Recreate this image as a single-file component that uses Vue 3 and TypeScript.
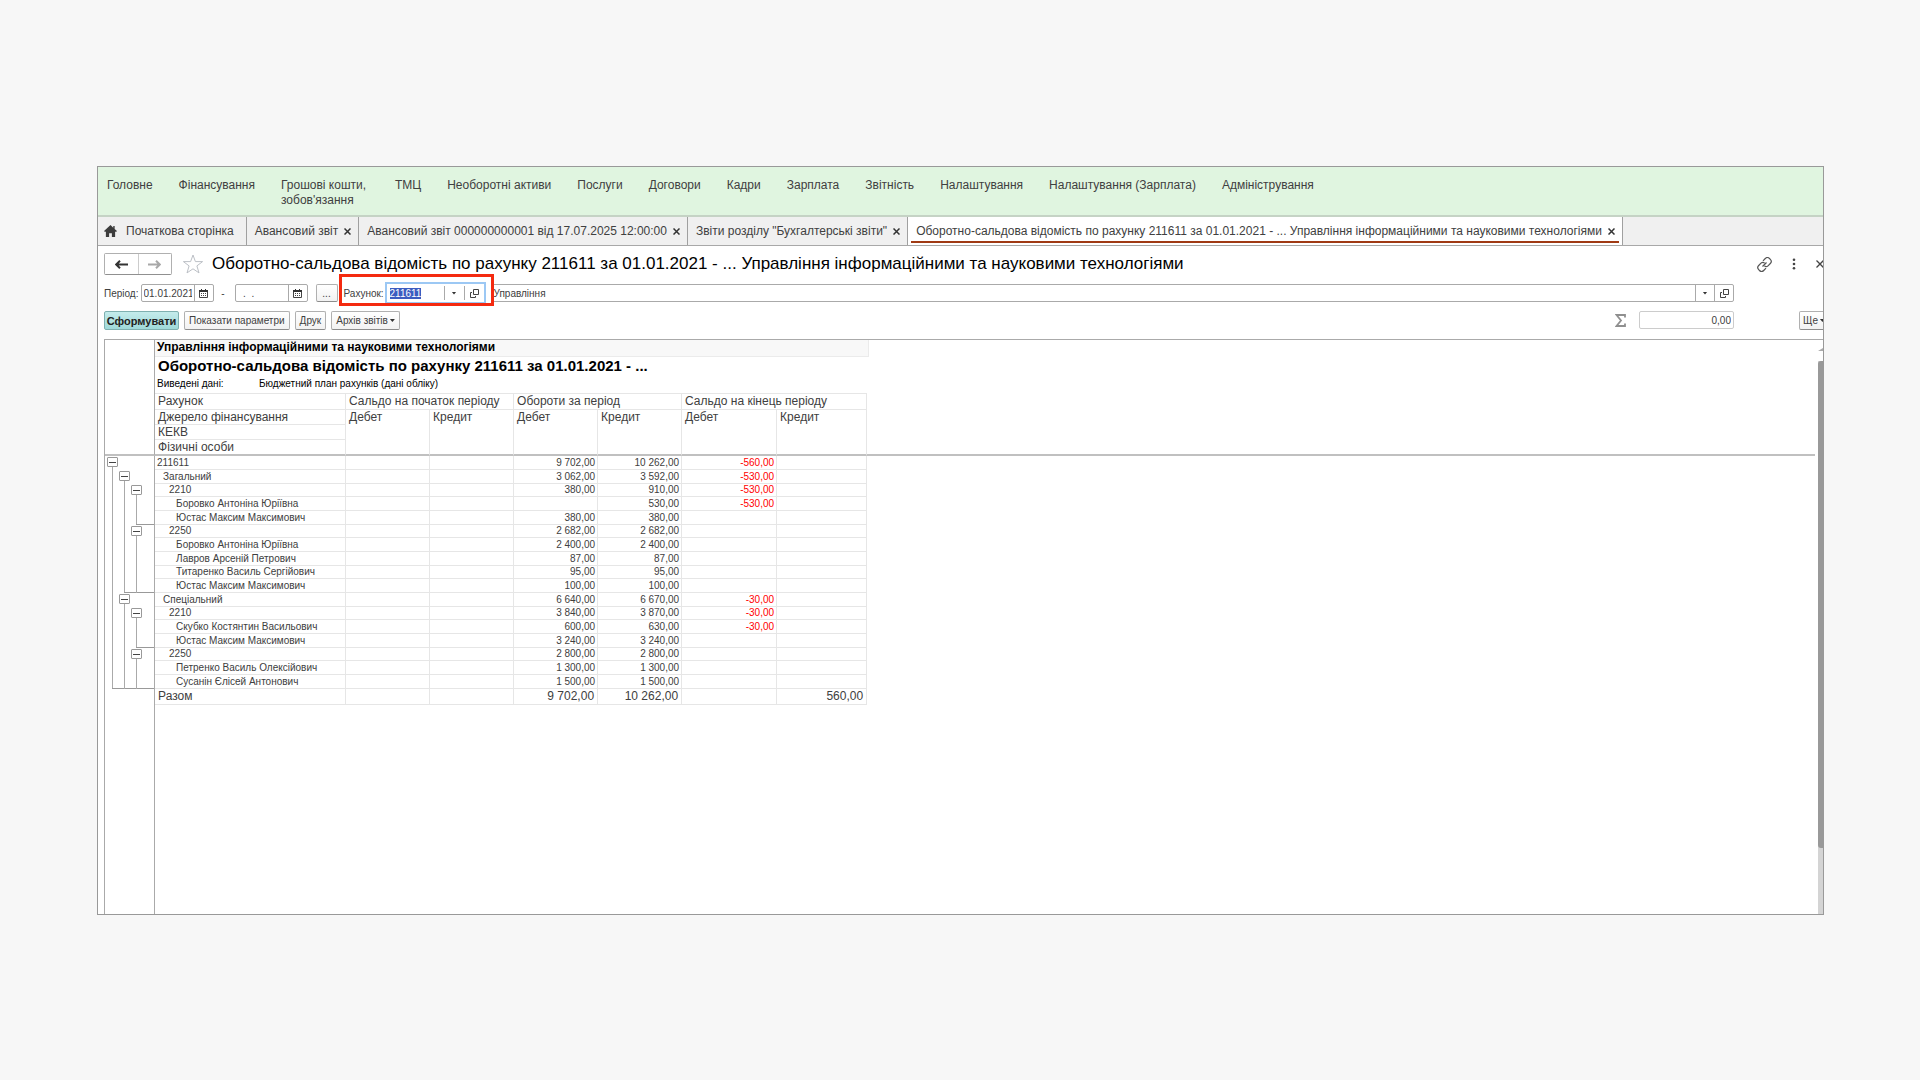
<script setup lang="ts">
import { onMounted, ref } from 'vue'

interface Row {
  name: string
  level: number
  values: string[]
  ends?: number
}

const menu: string[] = [
  'Головне', 'Фінансування', "Грошові кошти, зобов'язання", 'ТМЦ', 'Необоротні активи', 'Послуги', 'Договори',
  'Кадри', 'Зарплата', 'Звітність', 'Налаштування', 'Налаштування (Зарплата)', 'Адміністрування',
]

const tabs: string[] = [
  'Авансовий звіт',
  'Авансовий звіт 000000000001 від 17.07.2025 12:00:00',
  'Звіти розділу "Бухгалтерські звіти"',
  'Оборотно-сальдова відомість по рахунку 211611 за 01.01.2021 - ... Управління інформаційними та науковими технологіями',
]

// values: opening debit, opening credit, turnover debit, turnover credit, closing debit, closing credit
// ends: the outermost group level that closes after the row
const rows: Row[] = [
  { name: '211611', level: 0, values: ['', '', '9 702,00', '10 262,00', '-560,00', ''] },
  { name: 'Загальний', level: 1, values: ['', '', '3 062,00', '3 592,00', '-530,00', ''] },
  { name: '2210', level: 2, values: ['', '', '380,00', '910,00', '-530,00', ''] },
  { name: 'Боровко Антоніна Юріївна', level: 3, values: ['', '', '', '530,00', '-530,00', ''] },
  { name: 'Юстас Максим Максимович', level: 3, values: ['', '', '380,00', '380,00', '', ''], ends: 2 },
  { name: '2250', level: 2, values: ['', '', '2 682,00', '2 682,00', '', ''] },
  { name: 'Боровко Антоніна Юріївна', level: 3, values: ['', '', '2 400,00', '2 400,00', '', ''] },
  { name: 'Лавров Арсеній Петрович', level: 3, values: ['', '', '87,00', '87,00', '', ''] },
  { name: 'Титаренко Василь Сергійович', level: 3, values: ['', '', '95,00', '95,00', '', ''] },
  { name: 'Юстас Максим Максимович', level: 3, values: ['', '', '100,00', '100,00', '', ''], ends: 1 },
  { name: 'Спеціальний', level: 1, values: ['', '', '6 640,00', '6 670,00', '-30,00', ''] },
  { name: '2210', level: 2, values: ['', '', '3 840,00', '3 870,00', '-30,00', ''] },
  { name: 'Скубко Костянтин Васильович', level: 3, values: ['', '', '600,00', '630,00', '-30,00', ''] },
  { name: 'Юстас Максим Максимович', level: 3, values: ['', '', '3 240,00', '3 240,00', '', ''], ends: 2 },
  { name: '2250', level: 2, values: ['', '', '2 800,00', '2 800,00', '', ''] },
  { name: 'Петренко Василь Олексійович', level: 3, values: ['', '', '1 300,00', '1 300,00', '', ''] },
  { name: 'Сусанін Єлісей Антонович', level: 3, values: ['', '', '1 500,00', '1 500,00', '', ''], ends: 0 },
]
const total: string[] = ['', '', '9 702,00', '10 262,00', '', '560,00']

const dateFrom = ref('01.01.2021')
const dateTo = ref('  .  .')
const account = ref('211611')
const unit = ref('Управління')
const sum = ref('0,00')
const accountInput = ref<HTMLInputElement | null>(null)

function treeClass(row: Row, lane: number): Record<string, boolean> {
  return {
    start: row.level === lane,
    pass: row.level > lane,
    hook: row.ends === lane,
  }
}

onMounted(() => {
  accountInput.value?.focus()
  accountInput.value?.select()
})
</script>

<template>
  <div class="page">
    <main class="window">
      <nav class="menu">
        <a v-for="item in menu" :key="item" href="#" :class="{ narrow: item.startsWith('Грошові') }">{{ item }}</a>
      </nav>

      <div class="tabs">
        <div class="tab home">
          <svg width="13" height="12" viewBox="0 0 14 13"><path d="M7 0 0 6.500l1 1L2 7v6h3.500V9h3v4H12V7l1 .5 1-1-2.500-2.300V1H10v2z" fill="#3c3c3c" /></svg>
          <a href="#">Початкова сторінка</a>
        </div>
        <div v-for="(tab, i) in tabs" :key="tab" class="tab" :class="{ active: i === tabs.length - 1 }">
          <a href="#">{{ tab }}</a>
          <button class="bare" aria-label="Закрити вкладку">
            <svg width="7" height="7" viewBox="0 0 7 7"><path d="M.5.5l6 6m0-6l-6 6" stroke="#333" stroke-width="1.500" /></svg>
          </button>
        </div>
      </div>

      <header class="title-row">
        <div class="history">
          <button aria-label="Назад">
            <svg width="13" height="9" viewBox="0 0 13 9"><path d="M1 4.500h12M5 .8 1.200 4.500 5 8.200" fill="none" stroke="#333" stroke-width="2" /></svg>
          </button>
          <button aria-label="Вперед">
            <svg width="13" height="9" viewBox="0 0 13 9"><path d="M0 4.500h12M8 .8l3.800 3.700L8 8.200" fill="none" stroke="#a8a8a8" stroke-width="2" /></svg>
          </button>
        </div>
        <button class="bare star" aria-label="Обране">
          <svg width="22" height="20" viewBox="0 0 22 20"><path d="M11 1l2.400 6.600h7.200l-5.700 4.300 2.100 7L11 14.800 5 18.900l2.100-7L1.400 7.600h7.200z" fill="none" stroke="#bcc0c6" /></svg>
        </button>
        <h1>Оборотно-сальдова відомість по рахунку 211611 за 01.01.2021 - ... Управління інформаційними та науковими технологіями</h1>
        <div class="window-actions">
          <button class="bare" aria-label="Посилання">
            <svg width="15" height="15" viewBox="0 0 15 15" fill="none" stroke="#555" stroke-width="1.200"><path d="M6 3.800l2.300-2.300a3 3 0 0 1 4.200 0l.8.8a3 3 0 0 1 0 4.200L11 8.800a2.800 2.800 0 0 1-3.600.3M9 11.200l-2.300 2.300a3 3 0 0 1-4.200 0l-.8-.8a3 3 0 0 1 0-4.200L4 6.200a2.800 2.800 0 0 1 3.600-.3M5.500 9.500l4-4" /></svg>
          </button>
          <button class="bare" aria-label="Меню">
            <svg width="4" height="12" viewBox="0 0 4 12" fill="#444"><circle cx="2" cy="1.800" r="1.300" /><circle cx="2" cy="6" r="1.300" /><circle cx="2" cy="10.200" r="1.300" /></svg>
          </button>
          <button class="bare" aria-label="Закрити">
            <svg width="8" height="8" viewBox="0 0 8 8"><path d="M.5.5l7 7m0-7l-7 7" stroke="#444" stroke-width="1.300" /></svg>
          </button>
        </div>
      </header>

      <div class="filters">
        <label for="from">Період:</label>
        <span class="field date">
          <input id="from" v-model="dateFrom" type="text" />
          <button aria-label="Календар">
            <svg width="9" height="9" viewBox="0 0 9 9"><path d="M.5 1.500h8v7h-8z" fill="#fff" stroke="#444" /><path d="M0 1h9v2H0zM2 0h1v1H2zM6 0h1v1H6z" fill="#333" /><path d="M2 4.500h5M2 6.500h5" stroke="#444" stroke-dasharray="1 1" /></svg>
          </button>
        </span>
        <span class="dash">-</span>
        <span class="field date">
          <input v-model="dateTo" type="text" aria-label="Кінець періоду" />
          <button aria-label="Календар">
            <svg width="9" height="9" viewBox="0 0 9 9"><path d="M.5 1.500h8v7h-8z" fill="#fff" stroke="#444" /><path d="M0 1h9v2H0zM2 0h1v1H2zM6 0h1v1H6z" fill="#333" /><path d="M2 4.500h5M2 6.500h5" stroke="#444" stroke-dasharray="1 1" /></svg>
          </button>
        </span>
        <button class="btn more">...</button>
        <div class="account">
          <label for="account">Рахунок:</label>
          <span class="field focused">
            <input id="account" ref="accountInput" v-model="account" type="text" />
            <button aria-label="Вибрати"><span class="caret"></span></button>
            <button aria-label="Відкрити">
              <svg width="9" height="9" viewBox="0 0 9 9" fill="none" stroke="#444"><path d="M3.500.500h5v5h-5zM2 3.500H.5v5h5V7" /></svg>
            </button>
          </span>
        </div>
        <span class="field unit">
          <input v-model="unit" type="text" aria-label="Підрозділ" />
          <button aria-label="Вибрати"><span class="caret"></span></button>
          <button aria-label="Відкрити">
            <svg width="9" height="9" viewBox="0 0 9 9" fill="none" stroke="#444"><path d="M3.500.500h5v5h-5zM2 3.500H.5v5h5V7" /></svg>
          </button>
        </span>
      </div>

      <div class="commands">
        <button class="btn primary">Сформувати</button>
        <button class="btn">Показати параметри</button>
        <button class="btn">Друк</button>
        <button class="btn">Архів звітів<span class="caret"></span></button>
        <label class="sigma" for="sum" aria-label="Сума">
          <svg width="11" height="13" viewBox="0 0 11 13"><path d="M10 3.500V1H1.500l4.500 5.500L1.500 12H10V9.500" fill="none" stroke="#8f8f8f" stroke-width="1.800" /></svg>
        </label>
        <input id="sum" v-model="sum" class="sum" type="text" />
        <button class="btn rest">Ще<span class="caret"></span></button>
      </div>

      <div class="sheet">
        <div class="paper">
          <section class="caption">
            <p class="org">Управління інформаційними та науковими технологіями</p>
            <h2>Оборотно-сальдова відомість по рахунку 211611 за 01.01.2021 - ...</h2>
            <p class="output"><span>Виведені дані:</span><span>Бюджетний план рахунків (дані обліку)</span></p>
          </section>
          <table>
            <colgroup>
              <col class="c-pad" /><col class="c-lane" /><col class="c-lane" /><col class="c-lane" /><col class="c-edge" />
              <col class="c-name" /><col class="c-num" /><col class="c-num" /><col class="c-num" /><col class="c-num" />
              <col class="c-wide" /><col class="c-last" /><col />
            </colgroup>
            <thead>
              <tr>
                <td class="gutter" colspan="5" rowspan="4"></td>
                <th>Рахунок</th>
                <th colspan="2">Сальдо на початок періоду</th>
                <th colspan="2">Обороти за період</th>
                <th colspan="2">Сальдо на кінець періоду</th>
                <td class="blank" rowspan="4"></td>
              </tr>
              <tr>
                <th>Джерело фінансування</th>
                <th rowspan="3">Дебет</th>
                <th rowspan="3">Кредит</th>
                <th rowspan="3">Дебет</th>
                <th rowspan="3">Кредит</th>
                <th rowspan="3">Дебет</th>
                <th rowspan="3">Кредит</th>
              </tr>
              <tr><th>КЕКВ</th></tr>
              <tr><th>Фізичні особи</th></tr>
            </thead>
            <tbody>
              <tr v-for="(row, i) in rows" :key="i">
                <td></td>
                <td v-for="lane in [0, 1, 2]" :key="lane" class="lane" :class="[treeClass(row, lane), 'lane-' + lane]">
                  <button v-if="row.level === lane" aria-label="Згорнути групу"></button>
                </td>
                <td class="gutter"></td>
                <th scope="row" :class="'level-' + row.level">{{ row.name }}</th>
                <td v-for="(value, k) in row.values" :key="k" class="num" :class="{ negative: value.startsWith('-') }">{{ value }}</td>
                <td></td>
              </tr>
            </tbody>
            <tfoot>
              <tr>
                <td class="gutter" colspan="5"></td>
                <th scope="row">Разом</th>
                <td v-for="(value, k) in total" :key="k" class="num">{{ value }}</td>
                <td></td>
              </tr>
            </tfoot>
          </table>
          <div class="empty"></div>
        </div>
        <div class="scrollbar">
          <span class="up"></span>
          <div class="track"><div class="thumb"></div></div>
        </div>
      </div>
    </main>
  </div>
</template>

<style>
body {
  margin: 0;
  background: #f7f7f7;
}
</style>

<style scoped>
* {
  box-sizing: border-box;
}
.page {
  min-height: 100vh;
  padding: 166px 96px 165px 97px;
  display: flex;
  font-family: "Liberation Sans", Arial, sans-serif;
  font-size: 10px;
  color: #404040;
}
.window {
  flex: 1;
  min-width: 0;
  display: flex;
  flex-direction: column;
  background: #fff;
  border: 1px solid #999;
  overflow: hidden;
}
a {
  color: inherit;
  text-decoration: none;
}
button,
input {
  font: inherit;
  color: inherit;
  margin: 0;
  padding: 0;
}
svg {
  display: block;
}
.bare {
  border: 0;
  background: none;
}
.menu {
  display: flex;
  gap: 26px;
  height: 50px;
  padding: 11px 9px 0;
  background: #e0f5e0;
  border-bottom: 2px solid #c5d3c5;
  font-size: 12px;
  line-height: 15px;
  white-space: nowrap;
}
.menu .narrow {
  width: 88px;
  white-space: normal;
}
.tabs {
  display: flex;
  height: 29px;
  background: #f0f0f0;
  border-bottom: 1px solid #a8a8a8;
  font-size: 12px;
}
.tab {
  display: flex;
  align-items: center;
  gap: 6px;
  padding: 0 7px 0 8px;
  border-right: 1px solid #a0a0a0;
  white-space: nowrap;
}
.home {
  gap: 9px;
  padding: 0 12px 0 6px;
}
.tab.active {
  position: relative;
  background: #fff;
}
.tab.active::after {
  content: "";
  position: absolute;
  left: 3px;
  right: 3px;
  bottom: 2px;
  height: 2px;
  background: #a03a14;
}
.title-row {
  display: flex;
  align-items: center;
  height: 22px;
  margin: 7px 0 0 6px;
}
.history {
  display: flex;
  width: 68px;
  height: 22px;
  border: 1px solid #b0b0b0;
  border-bottom-color: #909090;
  border-radius: 2px;
}
.history button {
  flex: 1;
  display: grid;
  place-items: center;
  border: 0;
  background: #fff;
}
.history button + button {
  border-left: 1px solid #ccc;
}
.star {
  margin: 0 8px 0 10px;
}
h1 {
  margin: 0;
  flex: 1;
  font-size: 17px;
  font-weight: 400;
  color: #000;
  white-space: nowrap;
}
.window-actions {
  display: flex;
  align-items: center;
  gap: 20px;
  margin-right: -1px;
}
.filters {
  display: flex;
  align-items: center;
  height: 22px;
  margin: 7px 89px 0 6px;
}
.field {
  display: flex;
  height: 18px;
  border: 1px solid #aaa;
  border-radius: 2px;
  background: #fff;
}
.field input {
  flex: 1;
  min-width: 0;
  border: 0;
  padding: 0 2px;
  background: none;
  outline: 0;
  white-space: pre;
}
.field button {
  width: 19px;
  display: grid;
  place-items: center;
  border: 0;
  border-left: 1px solid #aaa;
  background: none;
}
.date {
  width: 73px;
  margin-left: 2px;
}
.dash {
  width: 19px;
  text-align: center;
}
.btn {
  display: flex;
  align-items: center;
  justify-content: center;
  gap: 2px;
  height: 19px;
  padding: 0 4px;
  border: 1px solid #b0b0b0;
  border-bottom-color: #8c8c8c;
  border-radius: 2px;
  background: linear-gradient(#fff, #f2f2f2);
  white-space: nowrap;
}
.more {
  width: 22px;
  height: 18px;
  margin-left: 8px;
}
.account {
  position: relative;
  display: flex;
  align-items: center;
  justify-content: space-between;
  width: 142px;
  height: 22px;
  margin-left: 6px;
}
.account::after {
  content: "";
  position: absolute;
  inset: -8px -8px -2px -5px;
  border: 3px solid #f42a10;
  pointer-events: none;
}
.focused {
  width: 101px;
  height: 22px;
  border: 2px solid #9cc8f4;
  border-radius: 0;
}
.focused input {
  padding: 0 3px;
}
.focused input::selection {
  background: #3c5cc0;
  color: #fff;
}
.focused button {
  width: 20px;
  margin: 2px 0;
}
.unit {
  flex: 1;
  margin-left: 5px;
}
.caret {
  width: 5px;
  height: 3px;
  background: #333;
  clip-path: polygon(0 0, 100% 0, 50% 100%);
}
.commands {
  display: flex;
  gap: 5px;
  height: 19px;
  margin: 7px -10px 9px 6px;
}
.primary {
  width: 75px;
  background: linear-gradient(#c4ebeb, #9fd9d9);
  border-color: #7fb0b0;
  color: #222;
  font-size: 11px;
  font-weight: 700;
}
.sigma {
  margin: 3px 8px 0 auto;
}
.sum {
  width: 95px;
  height: 18px;
  margin-right: 60px;
  padding: 0 2px;
  border: 1px solid #ccc;
  border-radius: 2px;
  text-align: right;
}
.rest {
  width: 34px;
  padding: 0 3px;
  justify-content: flex-start;
}
.sheet {
  flex: 1;
  display: flex;
  margin-left: 6px;
  border: solid #aaa;
  border-width: 1px 0 0 1px;
}
.paper {
  flex: 1;
  min-width: 0;
  display: flex;
  flex-direction: column;
}
.caption {
  margin-left: 49px;
  height: 53px;
  border-left: 1px solid #aaa;
  color: #000;
}
.caption p,
.caption h2 {
  margin: 0;
}
.org {
  width: 714px;
  height: 17px;
  padding-left: 2px;
  background: #f8f8f8;
  border: solid #ebebeb;
  border-width: 0 1px 1px 0;
  font-size: 12px;
  font-weight: 700;
  line-height: 15px;
}
.caption h2 {
  padding-left: 3px;
  font-size: 15px;
  line-height: 17px;
}
.output {
  display: flex;
  padding-left: 2px;
  line-height: 20px;
}
.output span:first-child {
  width: 102px;
}
table {
  width: 100%;
  table-layout: fixed;
  border-collapse: separate;
  border-spacing: 0;
}
.c-pad {
  width: 1px;
}
.c-lane {
  width: 12px;
}
.c-edge {
  width: 13px;
}
.c-name {
  width: 191px;
}
.c-num {
  width: 84px;
}
.c-wide {
  width: 95px;
}
.c-last {
  width: 90px;
}
td,
th {
  padding: 0;
  font-weight: 400;
  text-align: left;
  vertical-align: top;
  white-space: nowrap;
}
th,
.num {
  border: solid #e6e6e6;
  border-width: 0 1px 1px 0;
}
.gutter {
  border-right: 1px solid #aaa;
}
thead th {
  height: 15px;
  padding-left: 3px;
  font-size: 12px;
  line-height: 14px;
}
thead tr:first-child th {
  height: 17px;
  border-top: 1px solid #e6e6e6;
}
thead tr:last-child th,
thead th[rowspan],
thead td {
  border-bottom: 2px solid #c0c0c0;
}
tbody td,
tbody th {
  height: 14px;
  line-height: 12px;
  vertical-align: bottom;
}
tbody tr:nth-child(3n) td,
tbody tr:nth-child(3n) th {
  height: 13px;
}
.level-0 {
  padding-left: 2px;
}
.level-1 {
  padding-left: 8px;
}
.level-2 {
  padding-left: 14px;
}
.level-3 {
  padding-left: 21px;
}
.num {
  padding-right: 2px;
  text-align: right;
}
.negative {
  color: #f00;
}
tbody .lane {
  position: relative;
  vertical-align: top;
}
.lane button {
  position: relative;
  z-index: 1;
  display: block;
  width: 11px;
  height: 10px;
  margin: 1px 1px 0;
  border: 1px solid #999;
  border-radius: 1px;
  background: linear-gradient(#444, #444) center / 7px 1px no-repeat #fff;
}
.lane::before {
  position: absolute;
  left: 6px;
  top: 0;
  bottom: 0;
  width: 1px;
  background: #aaa;
}
.pass::before,
.start::before {
  content: "";
}
.start::before {
  top: 10px;
}
.hook::after {
  content: "";
  position: absolute;
  left: 6px;
  bottom: 0;
  width: 18px;
  height: 1px;
  background: #999;
}
.lane-1.hook::after {
  width: 30px;
}
.lane-0.hook::after {
  width: 42px;
}
tfoot td,
tfoot th {
  height: 16px;
  font-size: 12px;
  line-height: 15px;
}
tfoot th {
  padding-left: 3px;
}
tfoot .num {
  padding-right: 3px;
}
.empty {
  flex: 1;
  margin-left: 49px;
  border-left: 1px solid #aaa;
}
.scrollbar {
  display: flex;
  flex-direction: column;
  width: 5px;
  margin-left: 3px;
}
.up {
  height: 3px;
  margin: 8px 0 10px;
  background: #aaa;
  clip-path: polygon(0 100%, 100% 0, 100% 100%);
}
.track {
  flex: 1;
  background: #d4d4d4;
}
.thumb {
  height: 88%;
  background: #999;
  border-radius: 3px 0 0 3px;
}
</style>
